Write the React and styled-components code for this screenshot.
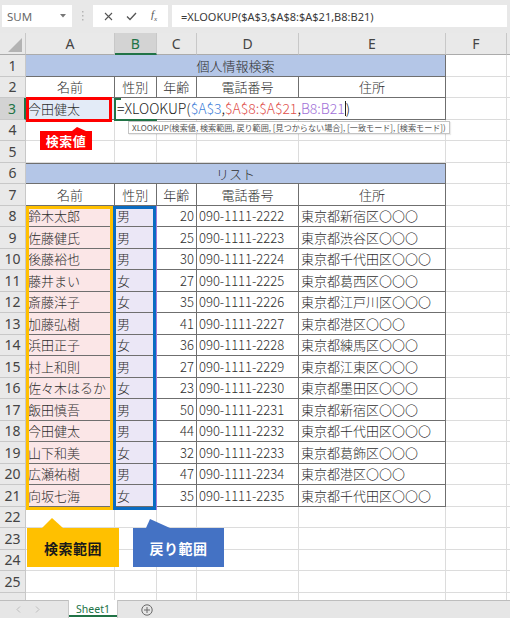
import React from 'react';
import styled, { createGlobalStyle } from 'styled-components';

const GREEN = '#217346';
const DARK = '#6f6f6f';
const GRID = '#dcdcdc';
const HDR_BORDER = '#c8c8c8';
const TITLE_BG = '#b4c6e7';
const PINK = '#fbe6e7';
const LAV = '#ebe7f6';
const ROW_H = 21.5;
const HEAD_H = 22;

const Global = createGlobalStyle`
  html, body { margin: 0; padding: 0; background: #fff; }
  body { font-family: "Noto Sans CJK JP", "Noto Sans", sans-serif; }
  #root { width: 510px; height: 618px; overflow: hidden; }
`;

const Window = styled.div`
  width: 510px;
  height: 618px;
  display: flex;
  flex-direction: column;
  overflow: hidden;
  background: #fff;
`;

/* ---------- formula bar ---------- */
const Toolbar = styled.div`
  height: 33px;
  flex: none;
  box-sizing: border-box;
  background: #e8e8e8;
  display: flex;
  align-items: flex-start;
  padding: 5px 3px 0 2px;
`;
const NameBox = styled.div`
  width: 70px;
  height: 22px;
  box-sizing: border-box;
  background: #fff;
  display: flex;
  align-items: center;
  justify-content: space-between;
  padding: 0 6px 0 5px;
  font: 11.5px "Noto Sans", sans-serif;
  color: #6a6a6a;
`;
const Grip = styled.div`
  width: 21px;
  height: 22px;
  display: flex;
  align-items: center;
  justify-content: center;
`;
const FnBox = styled.div`
  width: 75px;
  height: 22px;
  background: #fff;
  display: flex;
  align-items: center;
  justify-content: space-around;
  padding: 0 4px;
  box-sizing: border-box;
`;
const Fx = styled.span`
  font: italic 11px "Liberation Serif", serif;
  color: #555;
  sub { font-size: 7px; }
`;
const FormulaInput = styled.div`
  flex: 1;
  margin-left: 4px;
  height: 22px;
  background: #fff;
  display: flex;
  align-items: center;
  padding-left: 9px;
  font: 11px "Noto Sans", sans-serif;
  color: #3a3a3a;
  white-space: nowrap;
`;

/* ---------- sheet ---------- */
const Sheet = styled.div`
  position: relative;
  flex: 1;
  overflow: hidden;
  display: grid;
  grid-template-columns: 26px 89px 41.5px 40.5px 102px 147px 61px 20px;
  grid-template-rows: ${HEAD_H}px;
  grid-auto-rows: ${ROW_H}px;
  align-content: start;
`;
const Corner = styled.div`
  background: #e9e9e9;
  border-right: 1px solid ${HDR_BORDER};
  border-bottom: 1px solid #ababab;
  box-sizing: border-box;
  position: relative;
`;
const ColHead = styled.div`
  box-sizing: border-box;
  background: ${p => (p.$active ? '#d3d3d3' : '#e9e9e9')};
  border-right: 1px solid ${HDR_BORDER};
  border-bottom: ${p => (p.$active ? `2px solid ${GREEN}` : '1px solid #ababab')};
  color: ${p => (p.$active ? GREEN : '#444')};
  font: 14px "Noto Sans", sans-serif;
  display: flex;
  align-items: center;
  justify-content: center;
`;
const RowHead = styled.div`
  box-sizing: border-box;
  background: ${p => (p.$active ? '#d3d3d3' : '#e9e9e9')};
  border-right: ${p => (p.$active ? `2px solid ${GREEN}` : `1px solid ${HDR_BORDER}`)};
  border-bottom: 1px solid ${HDR_BORDER};
  color: ${p => (p.$active ? GREEN : '#444')};
  font: 14px "Noto Sans", sans-serif;
  display: flex;
  align-items: center;
  justify-content: center;
`;
const Cell = styled.div`
  box-sizing: border-box;
  grid-column: span ${p => p.$span || 1};
  position: relative;
  background: ${p => p.$bg || '#fff'};
  border-right: 1px solid ${p => (p.$dark ? DARK : GRID)};
  border-bottom: 1px solid ${p => (p.$dark ? DARK : GRID)};
  border-top: ${p => (p.$top ? `1px solid ${DARK}` : 'none')};
  display: flex;
  align-items: center;
  justify-content: ${p => (p.$align === 'center' ? 'center' : p.$align === 'right' ? 'flex-end' : 'flex-start')};
  padding: 0 2px;
  font-size: 13px;
  font-weight: 300;
  color: #2e2e2e;
  white-space: nowrap;
  overflow: ${p => (p.$visible ? 'visible' : 'hidden')};
  line-height: 1;
`;
const Formula = styled.span`
  font-size: 14px;
  font-weight: 300;
  color: #1a1a1a;
  display: flex;
  align-items: center;
`;
const Ref = styled.span`
  color: ${p => p.$c};
`;
const Caret = styled.span`
  display: inline-block;
  width: 1px;
  height: 15px;
  background: #222;
`;

/* ---------- overlays ---------- */
const Frame = styled.div`
  position: absolute;
  box-sizing: border-box;
  pointer-events: none;
  left: ${p => p.$x}px;
  top: ${p => p.$y}px;
  width: ${p => p.$w}px;
  height: ${p => p.$h}px;
  border: 3px solid ${p => p.$c};
`;
const ActiveCell = styled.div`
  position: absolute;
  box-sizing: border-box;
  left: 114px;
  top: 64.5px;
  width: 43px;
  height: 23.5px;
  border-left: 2px solid ${GREEN};
  border-bottom: 2px solid ${GREEN};
  &::before {
    content: '';
    position: absolute;
    left: 0;
    top: 0;
    width: 5px;
    height: 2px;
    background: ${GREEN};
  }
`;
const RefLine = styled.div`
  position: absolute;
  left: 155.5px;
  top: 173px;
  width: 1.5px;
  height: 304px;
  background: #a57cdc;
`;
const Tip = styled.div`
  position: absolute;
  left: 128px;
  top: 88px;
  height: 13px;
  box-sizing: border-box;
  border: 1px solid #c4c4c4;
  background: #fff;
  padding: 0 3px;
  display: flex;
  align-items: center;
  font-size: 8.1px;
  color: #555;
  white-space: nowrap;
  box-shadow: 1px 1px 1px rgba(0,0,0,0.08);
`;
const Callout = styled.div`
  position: absolute;
  left: ${p => p.$x}px;
  top: ${p => p.$y}px;
  width: ${p => p.$w}px;
  height: ${p => p.$h}px;
  background: ${p => p.$bg};
  color: ${p => p.$fg};
  display: flex;
  align-items: center;
  justify-content: center;
  font-size: ${p => p.$fs || 14}px;
  font-weight: 700;
  letter-spacing: 0.5px;
  svg { position: absolute; left: 0; top: -${p => p.$nh}px; overflow: visible; }
`;

/* ---------- sheet tabs ---------- */
const TabBar = styled.div`
  height: 18px;
  flex: none;
  box-sizing: border-box;
  background: #e6e6e6;
  border-top: 1px solid #bdbdbd;
  display: flex;
  align-items: stretch;
`;
const Arrows = styled.div`
  width: 68px;
  display: flex;
  align-items: center;
  gap: 14px;
  padding-left: 16px;
  box-sizing: border-box;
`;
const Tab = styled.div`
  width: 50px;
  margin-top: -1px;
  background: #fff;
  border-left: 1px solid #c8c8c8;
  border-right: 1px solid #c8c8c8;
  box-sizing: border-box;
  display: flex;
  align-items: center;
  justify-content: center;
  font: 10.5px "Noto Sans", sans-serif;
  color: ${GREEN};
  position: relative;
  &::after {
    content: '';
    position: absolute;
    left: 0;
    right: 0;
    bottom: 1px;
    height: 2px;
    background: ${GREEN};
  }
`;
const AddSheet = styled.div`
  width: 58px;
  display: flex;
  align-items: center;
  justify-content: center;
`;

const COL_LETTERS = ['A', 'B', 'C', 'D', 'E', 'F', ''];

const DATA = [
  ['鈴木太郎', '男', 20, '090-1111-2222', '東京都新宿区〇〇〇'],
  ['佐藤健氏', '男', 25, '090-1111-2223', '東京都渋谷区〇〇〇'],
  ['後藤裕也', '男', 30, '090-1111-2224', '東京都千代田区〇〇〇'],
  ['藤井まい', '女', 27, '090-1111-2225', '東京都葛西区〇〇〇'],
  ['斎藤洋子', '女', 35, '090-1111-2226', '東京都江戸川区〇〇〇'],
  ['加藤弘樹', '男', 41, '090-1111-2227', '東京都港区〇〇〇'],
  ['浜田正子', '女', 36, '090-1111-2228', '東京都練馬区〇〇〇'],
  ['村上和則', '男', 27, '090-1111-2229', '東京都江東区〇〇〇'],
  ['佐々木はるか', '女', 23, '090-1111-2230', '東京都墨田区〇〇〇'],
  ['飯田慎吾', '男', 50, '090-1111-2231', '東京都新宿区〇〇〇'],
  ['今田健太', '男', 44, '090-1111-2232', '東京都千代田区〇〇〇'],
  ['山下和美', '女', 32, '090-1111-2233', '東京都葛飾区〇〇〇'],
  ['広瀬祐樹', '男', 47, '090-1111-2234', '東京都港区〇〇〇'],
  ['向坂七海', '女', 35, '090-1111-2235', '東京都千代田区〇〇〇'],
];

const Tail = () => (
  <>
    <Cell />
    <Cell />
  </>
);

const EmptyRow = ({ n }) => (
  <>
    <RowHead>{n}</RowHead>
    {[0, 1, 2, 3, 4, 5, 6].map(i => <Cell key={i} />)}
  </>
);

const TitleRow = ({ n, text, top }) => (
  <>
    <RowHead>{n}</RowHead>
    <Cell $span={5} $dark $top={top} $bg={TITLE_BG} $align="center">{text}</Cell>
    <Tail />
  </>
);

const HeaderRow = ({ n }) => (
  <>
    <RowHead>{n}</RowHead>
    {['名前', '性別', '年齢', '電話番号', '住所'].map(h => (
      <Cell key={h} $dark $align="center">{h}</Cell>
    ))}
    <Tail />
  </>
);

const DataRow = ({ n, row }) => (
  <>
    <RowHead>{n}</RowHead>
    <Cell $dark $bg={PINK}>{row[0]}</Cell>
    <Cell $dark $bg={LAV}>{row[1]}</Cell>
    <Cell $dark $align="right">{row[2]}</Cell>
    <Cell $dark>{row[3]}</Cell>
    <Cell $dark>{row[4]}</Cell>
    <Tail />
  </>
);

const X = () => (
  <svg width="9" height="9" viewBox="0 0 9 9"><path d="M1 1L8 8M8 1L1 8" stroke="#555" strokeWidth="1.1" /></svg>
);
const Check = () => (
  <svg width="11" height="9" viewBox="0 0 11 9"><path d="M1 4.5L4 7.5L10 1" stroke="#555" strokeWidth="1.3" fill="none" /></svg>
);

export default function App() {
  return (
    <Window>
      <Global />
      <Toolbar>
        <NameBox>
          <span>SUM</span>
          <svg width="6" height="4" viewBox="0 0 6 4"><path d="M0 0H6L3 3.5Z" fill="#777" /></svg>
        </NameBox>
        <Grip>
          <svg width="2" height="10" viewBox="0 0 2 10">
            <rect x="0" y="0" width="1.5" height="1.5" fill="#b5b5b5" />
            <rect x="0" y="4" width="1.5" height="1.5" fill="#b5b5b5" />
            <rect x="0" y="8" width="1.5" height="1.5" fill="#b5b5b5" />
          </svg>
        </Grip>
        <FnBox>
          <X />
          <Check />
          <Fx>f<sub>x</sub></Fx>
        </FnBox>
        <FormulaInput>=XLOOKUP($A$3,$A$8:$A$21,B8:B21)</FormulaInput>
      </Toolbar>

      <Sheet>
        <Corner>
          <svg width="26" height="22" viewBox="0 0 26 22" style={{ position: 'absolute', left: 0, top: 0 }}>
            <path d="M8 19H22V5Z" fill="#b3b3b3" />
          </svg>
        </Corner>
        {COL_LETTERS.map((c, i) => (
          <ColHead key={i} $active={c === 'B'}>{c}</ColHead>
        ))}

        <TitleRow n={1} text="個人情報検索" />
        <HeaderRow n={2} />

        <RowHead $active>3</RowHead>
        <Cell $dark $bg="#e3ebf7">今田健太</Cell>
        <Cell $span={4} $dark $visible>
          <Formula>
            =XLOOKUP(<Ref $c="#3f7fd9">$A$3</Ref>,<Ref $c="#e0504c">$A$8:$A$21</Ref>,<Ref $c="#a171d8">B8:B21</Ref><Caret />)
          </Formula>
        </Cell>
        <Tail />

        <EmptyRow n={4} />
        <EmptyRow n={5} />
        <TitleRow n={6} text="リスト" top />
        <HeaderRow n={7} />
        {DATA.map((row, i) => (
          <DataRow key={i} n={i + 8} row={row} />
        ))}
        {[22, 23, 24, 25].map(n => (
          <EmptyRow key={n} n={n} />
        ))}
        <EmptyRow n="" />

        <ActiveCell />
        <Frame $x={26} $y={63.5} $w={86} $h={25.5} $c="#ff0000" />
        <Tip>XLOOKUP(検索値, 検索範囲, 戻り範囲, [見つからない場合], [一致モード], [検索モード])</Tip>
        <Callout $x={40} $y={98} $w={52} $h={19} $bg="#ff0000" $fg="#fff" $fs={13} $nh={4}>
          <svg width="52" height="4"><path d="M32 4L37 0L46 4Z" fill="#ff0000" /></svg>
          検索値
        </Callout>

        <RefLine />
        <Frame $x={26} $y={173} $w={86.5} $h={304} $c="#ffc000" />
        <Frame $x={112.5} $y={173} $w={43.5} $h={304} $c="#0a6cc2" />

        <Callout $x={27} $y={495} $w={92} $h={39} $bg="#ffc000" $fg="#1a1a1a" $nh={10}>
          <svg width="92" height="10"><path d="M15 10L25 0L36 10Z" fill="#ffc000" /></svg>
          検索範囲
        </Callout>
        <Callout $x={133} $y={495} $w={91} $h={39} $bg="#4472c4" $fg="#fff" $nh={9}>
          <svg width="91" height="9"><path d="M13 9L17 0L37 9Z" fill="#4472c4" /></svg>
          戻り範囲
        </Callout>
      </Sheet>

      <TabBar>
        <Arrows>
          <svg width="5" height="7" viewBox="0 0 5 7"><path d="M4 0.5L1 3.5L4 6.5" stroke="#bdbdbd" fill="none" /></svg>
          <svg width="5" height="7" viewBox="0 0 5 7"><path d="M1 0.5L4 3.5L1 6.5" stroke="#bdbdbd" fill="none" /></svg>
        </Arrows>
        <Tab>Sheet1</Tab>
        <AddSheet>
          <svg width="12" height="12" viewBox="0 0 12 12">
            <circle cx="6" cy="6" r="5.2" stroke="#6a6a6a" strokeWidth="1" fill="none" />
            <path d="M6 3V9M3 6H9" stroke="#6a6a6a" strokeWidth="1" />
          </svg>
        </AddSheet>
      </TabBar>
    </Window>
  );
}
